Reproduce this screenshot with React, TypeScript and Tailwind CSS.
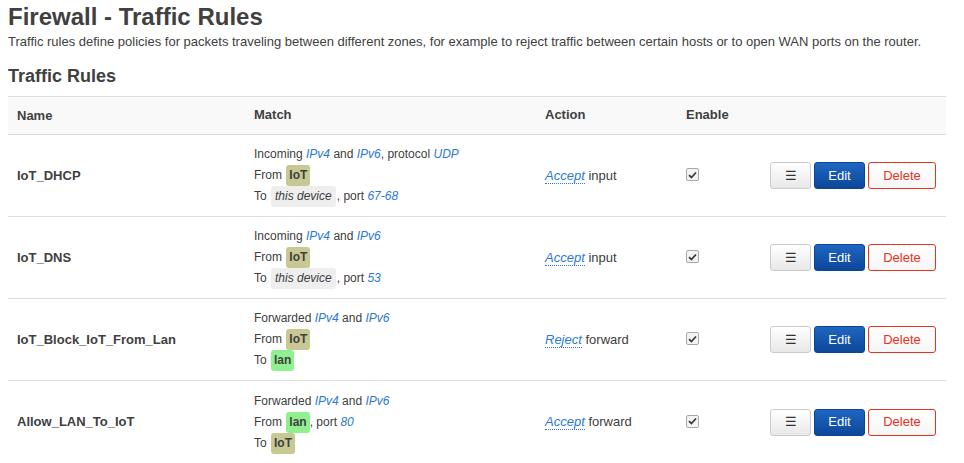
import React from "react";

type Part = string | { link: string } | { zone: string; color: string } | { device: string };

type Rule = {
  name: string;
  lines: Part[][];
  verb: string;
  chain: string;
};

const IOT = { zone: "IoT", color: "bg-[#c8c894]" };
const LAN = { zone: "lan", color: "bg-[#90f090]" };
const THIS = { device: "this device" };

const rules: Rule[] = [
  {
    name: "IoT_DHCP",
    lines: [
      ["Incoming ", { link: "IPv4" }, " and ", { link: "IPv6" }, ", protocol ", { link: "UDP" }],
      ["From ", IOT],
      ["To ", THIS, ", port ", { link: "67-68" }],
    ],
    verb: "Accept",
    chain: "input",
  },
  {
    name: "IoT_DNS",
    lines: [
      ["Incoming ", { link: "IPv4" }, " and ", { link: "IPv6" }],
      ["From ", IOT],
      ["To ", THIS, ", port ", { link: "53" }],
    ],
    verb: "Accept",
    chain: "input",
  },
  {
    name: "IoT_Block_IoT_From_Lan",
    lines: [
      ["Forwarded ", { link: "IPv4" }, " and ", { link: "IPv6" }],
      ["From ", IOT],
      ["To ", LAN],
    ],
    verb: "Reject",
    chain: "forward",
  },
  {
    name: "Allow_LAN_To_IoT",
    lines: [
      ["Forwarded ", { link: "IPv4" }, " and ", { link: "IPv6" }],
      ["From ", LAN, ", port ", { link: "80" }],
      ["To ", IOT],
    ],
    verb: "Accept",
    chain: "forward",
  },
];

function renderPart(p: Part, i: number) {
  if (typeof p === "string") return <span key={i} className="whitespace-pre">{p}</span>;
  if ("link" in p)
    return (
      <span key={i} className="italic text-[#2a7ad5]">
        {p.link}
      </span>
    );
  if ("zone" in p)
    return (
      <span key={i} className={`${p.color} ml-[1px] inline-block rounded-[3px] px-[3px] font-bold leading-[21px]`}>
        {p.zone}
      </span>
    );
  return (
    <span key={i} className="ml-[1px] mr-[1px] inline-block rounded-[3px] bg-[#eeeeee] px-[4px] italic leading-[21px]">
      {p.device}
    </span>
  );
}

const cols = "grid grid-cols-[237px_291px_141px_83px_186px]";

export default function App() {
  return (
    <div className="min-h-screen bg-white px-2 pt-[3px] text-[#404040] font-['Liberation_Sans',Arial,sans-serif]">
      <h2 className="text-[24px] font-bold leading-[28px]">Firewall - Traffic Rules</h2>
      <p className="mt-[3px] text-[13px] leading-[16px]">
        Traffic rules define policies for packets traveling between different zones, for example to reject traffic between certain hosts or to open WAN ports on the router.
      </p>
      <h3 className="mt-[15px] text-[18px] font-bold leading-[22px]">Traffic Rules</h3>

      <div className="mt-[9px] w-[938px]">
        <div className={`${cols} h-[39px] items-center border-y border-[#dddddd] bg-[#f9f9f9] text-[13px] font-bold`}>
          <div className="px-[9px]">Name</div>
          <div className="px-[9px] -mt-[2px]">Match</div>
          <div className="px-[9px] -mt-[2px]">Action</div>
          <div className="px-[9px] -mt-[2px]">Enable</div>
          <div />
        </div>

        {rules.map((r, idx) => (
          <div
            key={r.name}
            className={`${cols} h-[82px] items-center ${idx < rules.length - 1 ? "border-b border-[#dddddd]" : ""}`}
          >
            <div className="px-[9px] text-[13px] font-bold">{r.name}</div>
            <div className="px-[9px] text-[12px]">
              {r.lines.map((line, li) => (
                <div key={li} className="h-[21px] leading-[21px]">
                  {line.map(renderPart)}
                </div>
              ))}
            </div>
            <div className="px-[9px] text-[13px]">
              <span className="border-b border-dotted border-[#2a7ad5] italic text-[#2a7ad5]">{r.verb}</span>
              <span> {r.chain}</span>
            </div>
            <div className="px-[9px]">
              <span className="-mt-[2px] flex h-[13px] w-[13px] items-center justify-center rounded-[2px] border border-[#a8a8a8] bg-[#f3f3f3]">
                <svg width="9" height="8" viewBox="0 0 9 8" fill="none">
                  <path d="M1 4.2 L3.4 6.5 L8 1.5" stroke="#3a3a3a" strokeWidth="1.8" />
                </svg>
              </span>
            </div>
            <div className="flex justify-end gap-[3px] pr-[10px] text-[13px]">
              <button className="flex h-[27px] w-[41px] items-center justify-center rounded-[3px] border border-[#cccccc] bg-gradient-to-b from-white to-[#e8e8e8] text-[#333333]">
                ☰
              </button>
              <button className="h-[27px] w-[51px] rounded-[3px] border border-[#0b4791] bg-gradient-to-b from-[#1f66c2] to-[#0c4799] text-white">
                Edit
              </button>
              <button className="h-[27px] w-[68px] rounded-[3px] border border-[#e8321c] bg-gradient-to-b from-white to-[#f6f6f6] text-[#e8321c]">
                Delete
              </button>
            </div>
          </div>
        ))}
      </div>
    </div>
  );
}
